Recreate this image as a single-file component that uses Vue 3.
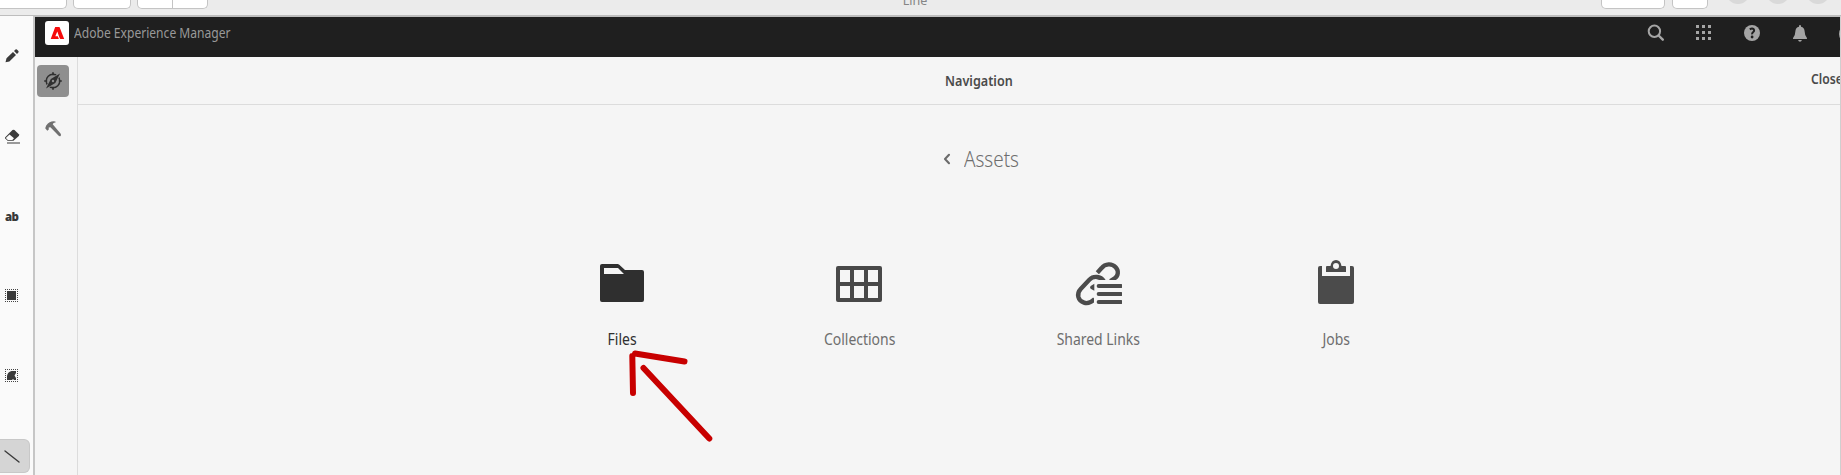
<template>
  <div class="window">
    <div class="titlebar">
      <div class="group left-group">
        <span class="btn wide"></span>
        <span class="btn medium"></span>
        <span class="btn split"><i></i><i></i></span>
      </div>
      <span class="title">Line</span>
      <div class="group right-group">
        <span class="btn save"></span>
        <span class="btn small"></span>
        <span v-for="n in 3" :key="n" class="dot"></span>
      </div>
    </div>

    <div class="body">
      <!-- drawing tools -->
      <div class="tools">
        <div v-for="tool in tools" :key="tool" class="tool" :class="{ active: tool === currentTool }" @click="currentTool = tool">
          <svg v-if="tool === 'pencil'" width="14" height="14" viewBox="0 0 14 14">
            <path d="M.5 13.3l1-4L8 3l3 3-6.600 6.400zM9 2l1.500-1.500q.7-.5 1.400.1l1.500 1.500q.5.700 0 1.300L12 5z" fill="#3a3a3a" />
          </svg>
          <svg v-else-if="tool === 'eraser'" width="16" height="15" viewBox="0 0 16 15">
            <path d="M1 8.500L8.500 1q1-.7 2 0l4.300 4.300q.7 1 0 1.700L9.500 11.700H3.600L1.200 9.500z" fill="#3a3a3a" />
            <path d="M5.500 5.600L10 9.300 8.300 11H3.800L1.800 9z" fill="#fafafa" />
            <path d="M3 14h13" stroke="#3a3a3a" />
          </svg>
          <b v-else-if="tool === 'text'" class="ab">ab</b>
          <svg v-else-if="tool === 'rect'" width="13" height="14" viewBox="0 0 13 14">
            <path d="M0 .5h13M0 12.500h13M.5 0v13M12.500 0v13" stroke="#444" stroke-dasharray="1 1" />
            <path d="M2 2h9v9H2z" fill="#3a3a3a" />
          </svg>
          <svg v-else-if="tool === 'shape'" width="13" height="14" viewBox="0 0 13 14">
            <path d="M0 .5h13M0 12.500h13M.5 0v13M12.500 0v13" stroke="#444" stroke-dasharray="1 1" />
            <path d="M6.500 2H11v2L9.500 6.500 11 9v2H9l-1-1-1 1H2V7q.5-4 4.500-5z" fill="#3a3a3a" />
          </svg>
          <svg v-else width="16" height="13" viewBox="0 0 16 13">
            <path d="M1 1l14 11" stroke="#3a3a3a" stroke-width="1.400" stroke-linecap="round" />
          </svg>
        </div>
      </div>

      <div class="app">
        <header class="topbar">
          <div class="brand">
            <svg class="logo" width="24" height="24" viewBox="0 0 24 24">
              <rect width="24" height="24" rx="3" fill="#fff" />
              <path d="M5.700 18L10.200 6h4.300L19.200 18h-3.600q-.6 0-.9-.7L12.300 10.600l-2 4.700h2.500l1.100 2.700z" fill="#f50b0b" />
            </svg>
            <span class="brand-name">Adobe Experience Manager</span>
          </div>
          <div class="actions">
            <svg width="18" height="18" viewBox="0 0 18 18">
              <circle cx="7.400" cy="7.300" r="5.700" fill="none" stroke="#a5a5a5" stroke-width="2" />
              <path d="M11.600 11.500l4.200 4.200" stroke="#a5a5a5" stroke-width="2.400" stroke-linecap="round" />
            </svg>
            <svg width="18" height="18" viewBox="0 0 18 18" fill="#a5a5a5">
              <template v-for="y in 3" :key="y">
                <rect v-for="x in 3" :key="x" :x="x * 6 - 5" :y="y * 6 - 5" width="3" height="3" />
              </template>
            </svg>
            <svg width="18" height="18" viewBox="0 0 18 18">
              <circle cx="9" cy="9" r="8" fill="#a5a5a5" />
              <path d="M6.800 5.400Q9 3.800 10.600 5.100q1.300 1.700-.6 3.100-1 .8-.9 2.200" fill="none" stroke="#1f1f1f" stroke-width="2" />
              <circle cx="9.100" cy="13" r="1.400" fill="#1f1f1f" />
            </svg>
            <svg width="18" height="18" viewBox="0 0 18 18" fill="#a5a5a5">
              <path d="M8 2q0-1 1-1t1 1v.7q3.400.7 3.700 5 .1 4 2 5.800.5.700.2 1.500H2.100q-.3-.8.200-1.500 1.900-1.800 2-5.800.3-4.300 3.700-5zM7.100 16h3.800q-.4 1.700-1.900 1.700T7.100 16z" />
            </svg>
            <span class="avatar"></span>
          </div>
        </header>

        <div class="main">
          <nav class="rail">
            <button class="rail-btn active">
              <svg width="18" height="18" viewBox="0 0 18 18">
                <circle cx="9" cy="9" r="6.800" fill="none" stroke="#303030" stroke-width="1.500" />
                <path d="M9 .2v3M9 14.800v3M.2 9h3M14.800 9h3" stroke="#303030" stroke-width="1.700" />
                <path d="M16 1.500L2 16.500" stroke="#8f8f8f" stroke-width="4" />
                <path d="M16 1.500L11.300 11 2 16.500 6.800 7z" fill="#303030" />
                <circle cx="9" cy="9" r="1.200" fill="#8f8f8f" />
              </svg>
            </button>
            <button class="rail-btn">
              <svg width="18" height="18" viewBox="0 0 18 18">
                <path d="M1.200 8.300l1-2.800Q6.200.4 11.300 1.500l.5.700Q9 2.600 8.700 4.300l8 9.500q.7 1.200-.1 2.100-1 .6-1.900-.1L6.400 7.200 4.700 7.600l.1 2-1.500 1.100z" fill="#707070" />
              </svg>
            </button>
          </nav>

          <section class="content">
            <div class="panel-head">
              <h1>Navigation</h1>
              <a class="close">Close</a>
            </div>
            <div class="crumb">
              <svg width="8" height="12" viewBox="0 0 8 12">
                <path d="M6 1.800L2 6l4 4.200" fill="none" stroke="#6b6b6b" stroke-width="2.100" stroke-linecap="round" stroke-linejoin="round" />
              </svg>
              <span class="crumb-name">Assets</span>
            </div>
            <div class="cards">
              <a v-for="card in cards" :key="card.id" class="card" :class="card.id">
                <svg v-if="card.id === 'files'" width="48" height="48" viewBox="0 0 48 48">
                  <path fill-rule="evenodd" d="M4 5h15.500q1 0 1.800.7L27 11h17q2 0 2 2v28q0 2-2 2H4q-2 0-2-2V7q0-2 2-2zm2 4v6h20l-6-6z" fill="#2f2f2f" />
                </svg>
                <svg v-else-if="card.id === 'collections'" width="48" height="48" viewBox="1 0 48 48">
                  <path fill-rule="evenodd" d="M3 7h42q2 0 2 2v32q0 2-2 2H3q-2 0-2-2V9q0-2 2-2zm2 4v12h10V11zm14 0v12h10V11zm14 0v12h10V11zM5 27v12h10V27zm14 0v12h10V27zm14 0v12h10V27z" fill="#484848" />
                </svg>
                <svg v-else-if="card.id === 'links'" width="48" height="48" viewBox="102 57 144 144">
                  <g fill="none" stroke="#4b4b4b" stroke-width="13">
                    <path d="M172 98L184 85C196 70 216 70 227 82C237 93 235 107 224 115L211 123" />
                    <path d="M192 124C182 108 160 107 148 119L122 147C108 162 114 182 132 188C144 192 154 187 164 177" />
                  </g>
                  <path d="M162 120h90v90h-90z" fill="#f5f5f5" />
                  <path d="M163 131v21l-11-6q-4-4 0-8z" fill="#4b4b4b" />
                  <path d="M176 138h67M176 162h67M176 186h67" stroke="#4b4b4b" stroke-width="12" stroke-linecap="round" />
                </svg>
                <svg v-else width="48" height="48" viewBox="0 0 48 48">
                  <path fill-rule="evenodd" d="M8 7h2v10h28V7h2q2 0 2 2v34q0 2-2 2H8q-2 0-2-2V9q0-2 2-2zM15 7h3.500C19 3 21 1 24 1s5 2 5.500 6H33q1 0 1 1v5H14V8q0-1 1-1zm9-3a3 3 0 1 0 0 6 3 3 0 1 0 0-6z" fill="#4b4b4b" />
                </svg>
                <span class="label">{{ card.label }}</span>
              </a>
            </div>
          </section>
        </div>
      </div>
    </div>

    <!-- hand-drawn arrow over the page -->
    <svg class="arrow" width="90" height="96" viewBox="625 348 90 96">
      <path d="M709.300 438.500L643.500 368M684.500 361.500L635 353.500M632.300 356L633 393" />
    </svg>
  </div>
</template>

<script setup>
import { ref } from 'vue'

const tools = ['pencil', 'eraser', 'text', 'rect', 'shape', 'line']
const currentTool = ref('line')

const cards = [
  { id: 'files', label: 'Files' },
  { id: 'collections', label: 'Collections' },
  { id: 'links', label: 'Shared Links' },
  { id: 'jobs', label: 'Jobs' }
]
</script>

<style>
body {
  margin: 0;
  overflow: hidden;
}
</style>

<style scoped>
.window {
  position: relative;
  width: 1841px;
  height: 475px;
  overflow: hidden;
  box-sizing: border-box;
  background: #f5f5f5;
  font-family: "Noto Sans", sans-serif;
}
.window * {
  box-sizing: border-box;
}
.titlebar {
  display: flex;
  justify-content: space-between;
  height: 17px;
  background: #ebebeb;
  border-bottom: 2px solid #bdbdbd;
}
.group {
  display: flex;
  gap: 7px;
  height: 9px;
  flex: 1;
}
.right-group {
  justify-content: flex-end;
  padding-right: 2px;
}
.btn {
  height: 9px;
  background: #fff;
  border: 1px solid #c4c4c4;
  border-top: 0;
  border-radius: 0 0 5px 5px;
}
.wide {
  width: 67px;
  border-left: 0;
  border-bottom-left-radius: 0;
}
.medium {
  width: 58px;
  margin-left: -1px;
}
.split {
  display: flex;
  width: 71px;
  margin-left: -1px;
}
.split i {
  flex: 1;
}
.split i + i {
  border-left: 1px solid #c4c4c4;
}
.save {
  width: 64px;
}
.small {
  width: 36px;
  margin-right: 11px;
}
.dot {
  width: 24px;
  height: 24px;
  margin: -20px 9px 0 0;
  border-radius: 50%;
  background: #d9d9d9;
}
.title {
  margin-top: -8px;
  margin-right: 9px;
  font-size: 12.5px;
  line-height: 17px;
  color: #858585;
}
.body {
  display: flex;
  height: 458px;
}
.tools {
  flex: none;
  width: 35px;
  margin-top: -1px;
  background: #fafafa;
  border-right: 2px solid #c6c6c6;
}
.tool {
  display: flex;
  align-items: center;
  height: 80px;
  padding-left: 5px;
}
.tool:nth-child(2),
.tool.active {
  padding-left: 4px;
}
.tool.active {
  width: 30px;
  height: 34px;
  margin-top: 23px;
  background: #d5d5d5;
  border: 1px solid #c8c8c8;
  border-left: 0;
  border-radius: 0 6px 6px 0;
}
.ab {
  padding-top: 2px;
  font: 900 12.5px/14px "Noto Sans", sans-serif;
  letter-spacing: -0.8px;
  color: #383838;
  transform: scaleX(0.92);
  transform-origin: left;
}
.app {
  display: flex;
  flex: none;
  flex-direction: column;
  width: 1886px;
}
.topbar {
  display: flex;
  justify-content: space-between;
  height: 40px;
  padding: 4px 60px 0 10px;
  background: #1f1f1f;
}
.brand {
  display: flex;
  gap: 5px;
  height: 24px;
}
.brand-name {
  font-size: 13.5px;
  line-height: 25px;
  white-space: nowrap;
  color: #999;
  transform: scaleX(0.895);
  transform-origin: left;
}
.actions {
  display: flex;
  gap: 30px;
  padding-top: 3px;
}
.avatar {
  width: 22px;
  height: 22px;
  margin-top: -1px;
  border-radius: 50%;
  background: #a5a5a5;
}
.main {
  display: flex;
  flex: 1;
}
.rail {
  display: flex;
  flex-direction: column;
  gap: 16px;
  width: 43px;
  padding: 8px 0 0 2px;
  border-right: 1px solid #dcdcdc;
}
.rail-btn {
  display: flex;
  align-items: center;
  justify-content: center;
  width: 32px;
  height: 32px;
  padding: 0;
  border: 0;
  border-radius: 4px;
  background: none;
}
.rail-btn.active {
  background: #8f8f8f;
}
.content {
  flex: 1;
}
.panel-head {
  display: flex;
  justify-content: center;
  position: relative;
  height: 48px;
  margin-left: -42px;
}
.panel-head::after {
  content: "";
  position: absolute;
  left: 42px;
  right: 0;
  bottom: 0;
  border-bottom: 1px solid #dcdcdc;
}
h1 {
  margin: 0;
  font-size: 14.5px;
  font-weight: 600;
  line-height: 47px;
  color: #4b4b4b;
  transform: scaleX(0.87);
}
.close {
  position: absolute;
  right: 74px;
  width: 36px;
  font-size: 13.5px;
  font-weight: 600;
  line-height: 45px;
  color: #4b4b4b;
  transform: scaleX(0.9);
  transform-origin: left;
}
.crumb {
  display: flex;
  align-items: center;
  justify-content: center;
  gap: 13px;
  height: 32px;
  margin: 38px 0 0 -38px;
}
.crumb-name {
  width: 55px;
  font-size: 21px;
  font-weight: 300;
  line-height: 32px;
  color: #6e6e6e;
  transform: scaleX(0.9);
  transform-origin: left;
}
.cards {
  display: flex;
  justify-content: center;
  margin: 84px 0 0 -41px;
}
.card {
  display: flex;
  flex-direction: column;
  align-items: center;
  width: 238px;
}
.label {
  margin-top: 20px;
  font-size: 15.5px;
  line-height: 24px;
  white-space: nowrap;
  color: #6e6e6e;
  transform: scaleX(0.9);
}
.files .label {
  color: #2f2f2f;
}
.arrow {
  position: absolute;
  left: 625px;
  top: 348px;
  fill: none;
  stroke: #c80000;
  stroke-width: 6;
  stroke-linecap: round;
}
.window::after {
  content: "";
  position: absolute;
  top: 16px;
  right: 0;
  bottom: 0;
  border-right: 1px solid #cfcfcf;
}
</style>
